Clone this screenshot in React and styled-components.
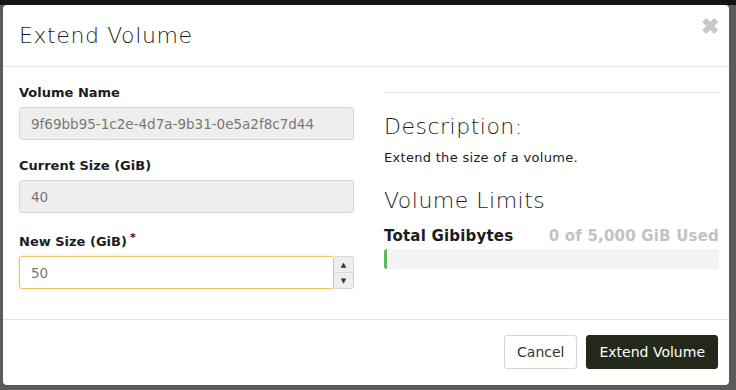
import React, { useState } from 'react';
import styled, { createGlobalStyle } from 'styled-components';

const Global = createGlobalStyle`
  html, body {
    margin: 0;
    padding: 0;
    background: #5b5b5b;
    font-family: 'DejaVu Sans', 'Open Sans', sans-serif;
    color: #1c1c1c;
  }
  * { box-sizing: border-box; }
`;

const Backdrop = styled.div`
  width: 736px;
  height: 390px;
  overflow: hidden;
  background: linear-gradient(#141510 0, #141510 5px, #5b5b5b 5px);
  padding: 5px 7px 0 3px;
`;

const Modal = styled.div`
  background: #fff;
  border-radius: 4px;
  height: 380px;
  display: flex;
  flex-direction: column;
`;

const Header = styled.div`
  display: flex;
  align-items: center;
  justify-content: space-between;
  height: 62px;
  padding: 0 10px 0 16px;
  border-bottom: 1px solid #e5e5e5;
`;

const Title = styled.h4`
  margin: 0;
  font-size: 22px;
  font-weight: 300;
  letter-spacing: 0.6px;
`;

const Close = styled.button`
  border: none;
  background: none;
  padding: 0;
  margin-top: -18px;
  font-size: 22px;
  font-weight: 700;
  color: #c8c8c8;
  cursor: pointer;
`;

const Body = styled.div`
  flex: 1;
  display: grid;
  grid-template-columns: 335px 335px;
  column-gap: 30px;
  padding: 14px 16px 0 16px;
  border-bottom: 1px solid #e5e5e5;
`;

const Column = styled.div`
  display: flex;
  flex-direction: column;
`;

const Label = styled.label`
  font-size: 13px;
  font-weight: 700;
  margin: 4px 0 7px;
  sup {
    font-size: 11px;
    margin-left: 3px;
  }
`;

const Field = styled.div`
  display: flex;
  margin-bottom: 14px;
`;

const Input = styled.input`
  flex: 1;
  height: 33px;
  padding: 0 11px;
  font-family: inherit;
  font-size: 13.5px;
  color: #777;
  background: ${(p) => (p.readOnly ? '#eeeeee' : '#fff')};
  border: 1px solid ${(p) => (p.$focus ? '#e9c46a' : '#d6d6d6')};
  border-radius: 3px;
  outline: none;
  box-shadow: ${(p) => (p.$focus ? '0 0 4px rgba(233,196,106,0.45)' : 'none')};
`;

const Spinner = styled.div`
  width: 20px;
  height: 33px;
  display: flex;
  flex-direction: column;
  border: 1px solid #d6d6d6;
  border-left: none;
  border-radius: 0 3px 3px 0;
  background: #eee;
`;

const SpinBtn = styled.div`
  flex: 1;
  display: flex;
  align-items: center;
  justify-content: center;
  font-size: 7px;
  color: #333;
  & + & {
    border-top: 1px solid #d6d6d6;
  }
`;

const Rule = styled.hr`
  border: none;
  border-top: 1px solid #e5e5e5;
  margin: 11px 0 0;
`;

const Heading = styled.h3`
  margin: ${(p) => (p.$first ? '21px' : '23px')} 0 0;
  font-size: 22px;
  font-weight: 300;
  letter-spacing: 0.5px;
`;

const Text = styled.p`
  margin: 11px 0 0;
  font-size: 13px;
  letter-spacing: 0.3px;
`;

const LimitRow = styled.div`
  display: flex;
  justify-content: space-between;
  margin-top: 14px;
  font-size: 15px;
  font-weight: 700;
  letter-spacing: 0.2px;
  span:last-child {
    color: #c2c2c2;
  }
`;

const Bar = styled.div`
  height: 20px;
  margin-top: 4px;
  background: #f3f3f3;
  border-radius: 3px;
  overflow: hidden;
`;

const Fill = styled.div`
  height: 100%;
  background: #5cb85c;
`;

const Footer = styled.div`
  display: flex;
  justify-content: flex-end;
  gap: 9px;
  padding: 15px 11px 16px;
`;

const Button = styled.button`
  height: 34px;
  padding: 0 12px;
  font-family: inherit;
  font-size: 14px;
  border-radius: 3px;
  cursor: pointer;
  color: ${(p) => (p.$primary ? '#fff' : '#333')};
  background: ${(p) => (p.$primary ? '#23281a' : '#fff')};
  border: 1px solid ${(p) => (p.$primary ? '#23281a' : '#d6d6d6')};
`;

const App = () => {
  const [size, setSize] = useState('50');

  return (
    <>
      <Global />
      <Backdrop>
        <Modal>
          <Header>
            <Title>Extend Volume</Title>
            <Close>✖</Close>
          </Header>
          <Body>
            <Column>
              <Label>Volume Name</Label>
              <Field>
                <Input readOnly value="9f69bb95-1c2e-4d7a-9b31-0e5a2f8c7d44" />
              </Field>
              <Label>Current Size (GiB)</Label>
              <Field>
                <Input readOnly value="40" />
              </Field>
              <Label>
                New Size (GiB)<sup>*</sup>
              </Label>
              <Field>
                <Input $focus value={size} onChange={(e) => setSize(e.target.value)} />
                <Spinner>
                  <SpinBtn>▲</SpinBtn>
                  <SpinBtn>▼</SpinBtn>
                </Spinner>
              </Field>
            </Column>
            <Column>
              <Rule />
              <Heading $first>Description:</Heading>
              <Text>Extend the size of a volume.</Text>
              <Heading>Volume Limits</Heading>
              <LimitRow>
                <span>Total Gibibytes</span>
                <span>0 of 5,000 GiB Used</span>
              </LimitRow>
              <Bar>
                <Fill style={{ width: `${Math.max((0 / 5000) * 100, 1)}%` }} />
              </Bar>
            </Column>
          </Body>
          <Footer>
            <Button>Cancel</Button>
            <Button $primary>Extend Volume</Button>
          </Footer>
        </Modal>
      </Backdrop>
    </>
  );
};

export default App;
